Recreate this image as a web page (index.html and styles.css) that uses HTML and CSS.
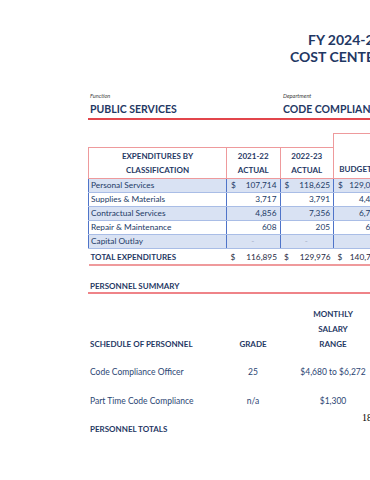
FILE: index.html
```html
<!DOCTYPE html>
<html lang="en">
<head>
<meta charset="utf-8">
<title>FY 2024-25 Cost Center</title>
<link rel="stylesheet" href="styles.css">
</head>
<body>
<div class="page">
  <header class="titles">
    <div class="title t1">FY 2024-25</div>
    <div class="title t2">COST CENTER SUMMARY</div>
  </header>

  <section class="ident">
    <div class="ident-col">
      <div class="ident-label">Function</div>
      <div class="ident-value">PUBLIC SERVICES</div>
    </div>
    <div class="ident-col">
      <div class="ident-label">Department</div>
      <div class="ident-value">CODE COMPLIANCE</div>
    </div>
  </section>

  <table class="exp">
    <colgroup>
      <col class="c-name"><col class="c-num"><col class="c-num"><col class="c-bud"><col class="c-num">
    </colgroup>
    <tr class="grp">
      <td colspan="3" class="grp-blank"></td>
      <td colspan="2" class="grp-box">2023-24</td>
    </tr>
    <tr class="hdr">
      <th class="h-first">EXPENDITURES BY<br>CLASSIFICATION</th>
      <th>2021-22<br>ACTUAL</th>
      <th>2022-23<br>ACTUAL</th>
      <th class="h-open h-bud">&nbsp;<br>BUDGET</th>
      <th class="h-open">&nbsp;<br>ESTIMATE</th>
    </tr>
    <tr class="band">
      <td class="lbl">Personal Services</td>
      <td class="num"><span class="cur">$</span>107,714</td>
      <td class="num"><span class="cur">$</span>118,625</td>
      <td class="num"><span class="cur">$</span>129,025</td>
      <td class="num"><span class="cur">$</span>129,025</td>
    </tr>
    <tr class="plain">
      <td class="lbl">Supplies &amp; Materials</td>
      <td class="num">3,717</td>
      <td class="num">3,791</td>
      <td class="num">4,400</td>
      <td class="num">4,400</td>
    </tr>
    <tr class="band">
      <td class="lbl">Contractual Services</td>
      <td class="num">4,856</td>
      <td class="num">7,356</td>
      <td class="num">6,700</td>
      <td class="num">6,700</td>
    </tr>
    <tr class="plain">
      <td class="lbl">Repair &amp; Maintenance</td>
      <td class="num">608</td>
      <td class="num">205</td>
      <td class="num">600</td>
      <td class="num">600</td>
    </tr>
    <tr class="band">
      <td class="lbl">Capital Outlay</td>
      <td class="dash">-</td>
      <td class="dash">-</td>
      <td class="num"></td>
      <td class="num"></td>
    </tr>
    <tr class="total">
      <td class="lbl">TOTAL EXPENDITURES</td>
      <td class="num"><span class="cur">$</span>116,895</td>
      <td class="num"><span class="cur">$</span>129,976</td>
      <td class="num"><span class="cur">$</span>140,725</td>
      <td class="num"><span class="cur">$</span>140,725</td>
    </tr>
  </table>

  <section class="pers">
    <div class="pers-title">PERSONNEL SUMMARY</div>
    <div class="pers-grid">
      <div class="ph sched">SCHEDULE OF PERSONNEL</div>
      <div class="ph center">GRADE</div>
      <div class="ph center">MONTHLY<br>SALARY<br>RANGE</div>

      <div class="pc first sched">Code Compliance Officer</div>
      <div class="pc first center">25</div>
      <div class="pc first center">$4,680 to $6,272</div>

      <div class="pc sched">Part Time Code Compliance</div>
      <div class="pc center">n/a</div>
      <div class="pc center">$1,300</div>
    </div>
    <div class="stray">18</div>
    <div class="pers-total">PERSONNEL TOTALS</div>
  </section>
</div>
</body>
</html>
```

FILE: styles.css
```css
html, body {
  margin: 0;
  padding: 0;
  background: #ffffff;
}
body {
  overflow: hidden;
  width: 370px;
  height: 480px;
  font-family: Lato, "Open Sans", sans-serif;
  color: #1f3864;
}
.page {
  width: 720px;
  padding-left: 88px;
  box-sizing: border-box;
}

/* titles */
.titles {
  padding-top: 31px;
}
.title {
  font-size: 14px;
  font-weight: 700;
  line-height: 17px;
  color: #1f3864;
  white-space: nowrap;
}
.t1 { padding-left: 220px; }
.t2 { padding-left: 202px; }

/* function / department */
.ident {
  margin-top: 27px;
  display: grid;
  grid-template-columns: 193px 1fr;
  border-bottom: 2px solid #e2454b;
  padding-bottom: 2px;
}
.ident-col {
  padding-left: 2px;
}
.ident-label {
  font-size: 5.6px;
  font-style: italic;
  line-height: 8px;
  color: #404040;
}
.ident-value {
  margin-top: 3px;
  font-size: 10.5px;
  font-weight: 700;
  line-height: 13px;
  color: #1f3864;
  white-space: nowrap;
}

/* expenditures table */
.exp {
  margin-top: 13px;
  border-collapse: collapse;
  table-layout: fixed;
  width: 349px;
  font-size: 8.3px;
  color: #1f3864;
}
.c-name { width: 138px; }
.c-num { width: 53.5px; }
.c-bud { width: 50px; }

.grp td { height: 13px; padding: 0; line-height: 13px; }
.grp-blank {
  border: none;
}
.grp-box {
  border: 1px solid #ee9a9c;
  border-bottom: none;
  text-align: center;
  font-weight: 700;
  font-size: 8px;
  padding-left: 70px !important;
}
.hdr th {
  border: 1px solid #ee9a9c;
  font-weight: 700;
  font-size: 8px;
  line-height: 14px;
  padding: 1px 1px 0;
  text-align: center;
  white-space: nowrap;
  overflow: hidden;
  vertical-align: top;
  height: 29px;
}
.hdr th.h-open {
  border-top: none;
}
.hdr th.h-bud {
  padding-right: 7px;
}
.exp td {
  white-space: nowrap;
  overflow: hidden;
}
.band td, .plain td {
  height: 13.2px;
  line-height: 13px;
  padding: 0 3px 0 2px;
  border-left: 1px solid #4f74c9;
  border-right: 1px solid #4f74c9;
  border-top: 1px solid #a9bde6;
  border-bottom: 1px solid #a9bde6;
}
.band td {
  background: #d9e2f3;
}
.lbl {
  text-align: left;
  color: #223a66;
}
.num {
  text-align: right;
  color: #223a66;
}
.cur {
  float: left;
  padding-left: 2px;
}
.dash {
  text-align: center;
  color: #a7b0c6;
}
.total td {
  height: 13.5px;
  line-height: 13px;
  padding: 1px 3px 0 2px;
  border-bottom: 2px solid #ef9a9c;
}
.total .lbl {
  font-weight: 700;
  font-size: 8px;
  color: #1f3864;
}
.total .num {
  color: #1f2a44;
}

/* personnel */
.pers-title {
  margin-top: 14px;
  font-size: 8px;
  font-weight: 700;
  line-height: 12px;
  padding-left: 2px;
  border-bottom: 2px solid #ef8388;
}
.pers-grid {
  margin-top: 13px;
  display: grid;
  grid-template-columns: 125px 80px 80px;
  grid-auto-rows: auto;
}
.ph {
  font-size: 8px;
  font-weight: 700;
  line-height: 15px;
  align-self: end;
  color: #1f3864;
}
.pc {
  font-size: 8.5px;
  line-height: 29px;
  color: #2c4674;
  white-space: nowrap;
}
.pc.first {
  margin-top: 6px;
}
.sched { padding-left: 2px; }
.center { text-align: center; }
.stray {
  margin-top: -3px;
  padding-left: 274px;
  font-family: "Liberation Serif", serif;
  font-size: 10px;
  line-height: 10px;
  color: #000000;
}
.pers-total {
  font-size: 8px;
  font-weight: 700;
  line-height: 12px;
  padding-left: 2px;
  color: #1f3864;
}
```
